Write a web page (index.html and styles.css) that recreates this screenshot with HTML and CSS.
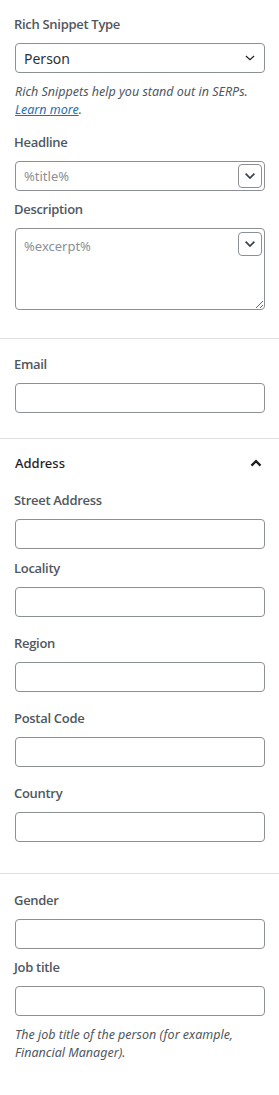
FILE: index.html
```html
<!DOCTYPE html>
<html>
<head>
    <title>Schema Settings</title>
    <meta name="viewport" content="width=device-width, initial-scale=1.0">
    <link rel="stylesheet" href="styles.css">
</head>
<body>
    <div class="sidebar">
        <!-- Snippet type and meta -->
        <div class="panel panel-first">
            <div class="field field-help">
                <label class="field-label">Rich Snippet Type</label>
                <div class="select-wrap">
                    <select class="control">
                        <option>Person</option>
                    </select>
                    <svg class="select-arrow" width="14" height="14" viewBox="0 0 24 24">
                        <path d="M5 8.5l7 6.5 7-6.5" fill="none" stroke="#1e1e1e" stroke-width="2"/>
                    </svg>
                </div>
                <p class="help">Rich Snippets help you stand out in SERPs. <a href="#">Learn more</a>.</p>
            </div>
            <div class="field">
                <label class="field-label">Headline</label>
                <div class="input-wrap">
                    <input class="control control-muted" type="text" value="%title%">
                    <button class="vars-btn" type="button">
                        <svg width="14" height="14" viewBox="0 0 24 24">
                            <path d="M4.5 8l7.5 7.5 7.5-7.5" fill="none" stroke="#3c434a" stroke-width="3"/>
                        </svg>
                    </button>
                </div>
            </div>
            <div class="field field-last">
                <label class="field-label">Description</label>
                <div class="input-wrap">
                    <textarea class="control control-muted textarea">%excerpt%</textarea>
                    <button class="vars-btn vars-btn-area" type="button">
                        <svg width="14" height="14" viewBox="0 0 24 24">
                            <path d="M4.5 8l7.5 7.5 7.5-7.5" fill="none" stroke="#3c434a" stroke-width="3"/>
                        </svg>
                    </button>
                </div>
            </div>
        </div>

        <!-- Email -->
        <div class="panel">
            <div class="field field-end">
                <label class="field-label">Email</label>
                <input class="control" type="text">
            </div>
        </div>

        <!-- Address group -->
        <div class="panel panel-group">
            <button class="group-toggle" type="button">
                <span>Address</span>
                <svg width="18" height="18" viewBox="0 0 24 24">
                    <path d="M6 15.5l6-6 6 6" fill="none" stroke="#1e1e1e" stroke-width="3"/>
                </svg>
            </button>
            <div class="group-body">
                <div class="field">
                    <label class="field-label">Street Address</label>
                    <input class="control" type="text">
                </div>
                <div class="field field-wide">
                    <label class="field-label">Locality</label>
                    <input class="control" type="text">
                </div>
                <div class="field field-wide">
                    <label class="field-label">Region</label>
                    <input class="control" type="text">
                </div>
                <div class="field field-wide">
                    <label class="field-label">Postal Code</label>
                    <input class="control" type="text">
                </div>
                <div class="field field-wide">
                    <label class="field-label">Country</label>
                    <input class="control" type="text">
                </div>
            </div>
        </div>

        <!-- Person details -->
        <div class="panel panel-last">
            <div class="field">
                <label class="field-label">Gender</label>
                <input class="control" type="text">
            </div>
            <div class="field">
                <label class="field-label">Job title</label>
                <input class="control" type="text">
                <p class="help">The job title of the person (for example, Financial Manager).</p>
            </div>
        </div>
    </div>
</body>
</html>
```

FILE: styles.css
```css
body {
    margin: 0;
    background-color: #fff;
    font-family: "Noto Sans", "Open Sans", sans-serif;
    font-size: 13px;
    color: #1e1e1e;
}
.sidebar {
    width: 279px;
}
.panel {
    border-top: 1px solid #e0e0e0;
    padding: 16px 14px 16px 15px;
}
.panel-first {
    border-top: none;
    padding-top: 15px;
}
.field {
    margin-bottom: 9px;
}
.field-help {
    margin-bottom: 14px;
}
.field-last {
    margin-bottom: 12px;
}
.field-end {
    margin-bottom: 9px;
}
.field-wide {
    margin-top: 7px;
    margin-bottom: 17px;
}
.field-label {
    display: block;
    margin-left: -1px;
    font-family: "Open Sans", "Noto Sans", sans-serif;
    font-weight: 600;
    color: #50575e;
    line-height: 18px;
    margin-bottom: 10px;
    letter-spacing: -0.3px;
}
.control {
    display: block;
    box-sizing: border-box;
    width: 100%;
    height: 30px;
    margin: 0;
    padding: 0 8px;
    border: 1px solid #8c8f94;
    border-radius: 4px;
    background-color: #fff;
    font-family: inherit;
    font-size: 13px;
    color: #2c3338;
    outline: none;
}
.control-muted {
    color: #8c8f94;
}
.select-wrap,
.input-wrap {
    position: relative;
}
select.control {
    -webkit-appearance: none;
    appearance: none;
    padding-left: 8px;
    font-size: 14px;
}
.select-arrow {
    position: absolute;
    right: 8px;
    top: 8px;
    pointer-events: none;
}
.textarea {
    height: 82px;
    padding: 8px 34px 8px 8px;
    resize: vertical;
    line-height: 18px;
}
.vars-btn {
    position: absolute;
    right: 3px;
    top: 3px;
    width: 24px;
    height: 24px;
    padding: 0;
    border: 1px solid #8c8f94;
    border-radius: 4px;
    background-color: #fff;
    display: flex;
    align-items: center;
    justify-content: center;
}
.vars-btn-area {
    top: 4px;
}
.help {
    margin: 10px 0 0;
    font-style: italic;
    color: #50575e;
    line-height: 18px;
    font-size: 12.5px;
}
.help a {
    color: #2271b1;
}
.panel-group {
    padding-top: 0;
}
.group-toggle {
    display: flex;
    justify-content: space-between;
    align-items: center;
    width: 100%;
    height: 48px;
    padding: 0;
    border: none;
    background: none;
    font-family: inherit;
    font-size: 13px;
    font-weight: 500;
    color: #1e1e1e;
}
.group-body {
    padding-top: 4px;
}
.group-body .field:first-child {
    margin-bottom: 10px;
}
.group-body .field:last-child {
    margin-bottom: 15px;
}
.panel-last {
    padding-top: 17px;
}
.panel-last .field:last-child {
    margin-bottom: 0;
}
```
